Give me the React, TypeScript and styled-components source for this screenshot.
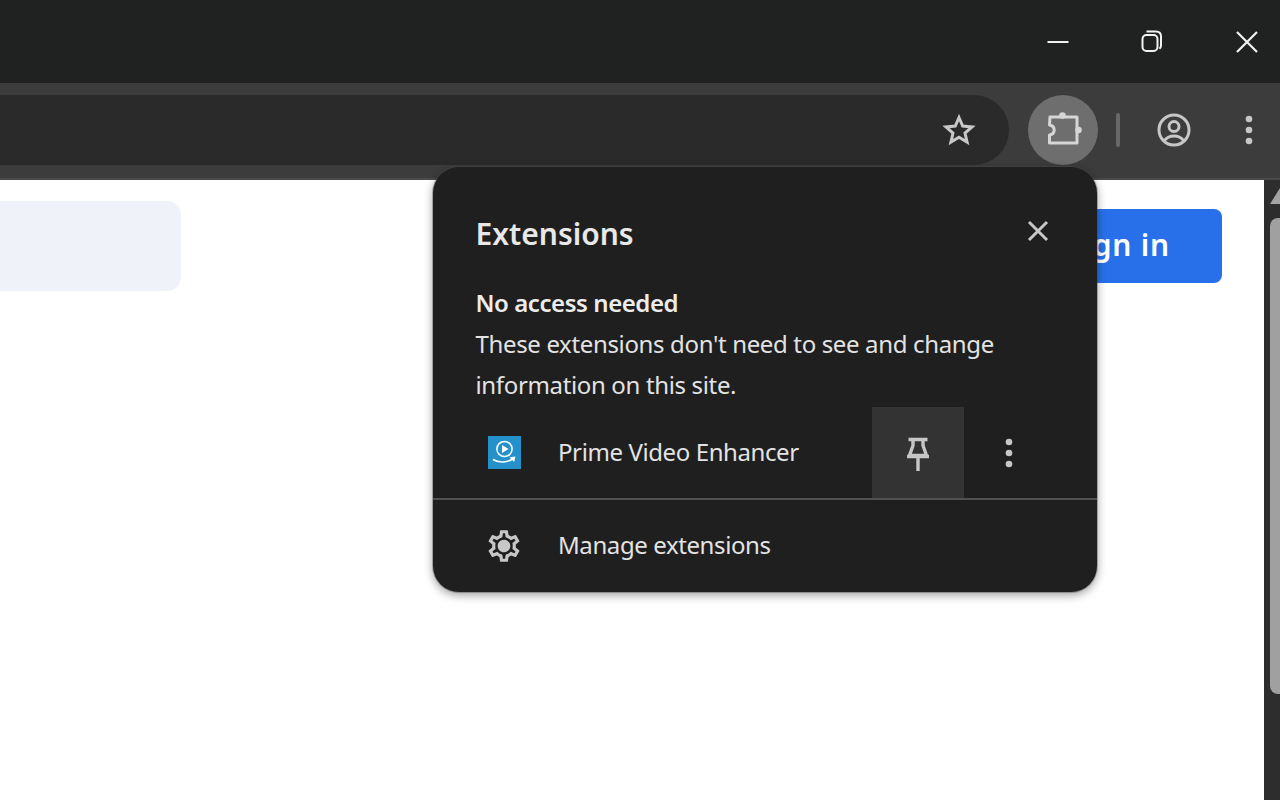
import * as React from "react";
import styled, { createGlobalStyle } from "styled-components";

const GlobalStyle = createGlobalStyle`
  html, body, #root {
    margin: 0;
    padding: 0;
    width: 100%;
    height: 100%;
    overflow: hidden;
    background: #ffffff;
  }
`;

const Page = styled.div`
  position: relative;
  display: flex;
  flex-direction: column;
  width: 1280px;
  height: 800px;
  overflow: hidden;
  font-family: "Noto Sans", "Open Sans", sans-serif;
`;

const TitleBar = styled.div`
  box-sizing: border-box;
  height: 83px;
  flex: none;
  background: #202222;
  display: flex;
  justify-content: flex-end;
  align-items: center;
  gap: 62.5px;
  padding-right: 17px;
`;

const WindowButton = styled.div`
  width: 32px;
  height: 32px;
  display: flex;
  align-items: center;
  justify-content: center;
`;

const Toolbar = styled.div`
  box-sizing: border-box;
  height: 97px;
  flex: none;
  background: #3c3c3c;
  border-bottom: 2px solid #4a4a4a;
  padding-top: 12px;
  display: flex;
  align-items: flex-start;
`;

const Omnibox = styled.div`
  box-sizing: border-box;
  width: 1009px;
  height: 70px;
  background: #2a2a2a;
  border-radius: 0 35px 35px 0;
  display: flex;
  justify-content: flex-end;
  align-items: center;
  padding-right: 33px;
`;

const ExtensionButton = styled.div`
  width: 70px;
  height: 70px;
  margin-left: 19px;
  border-radius: 50%;
  background: #6e6e6e;
  display: flex;
  align-items: center;
  justify-content: center;
`;

const Separator = styled.div`
  width: 4px;
  height: 34px;
  margin: 18px 0 0 18px;
  border-radius: 2px;
  background: #686868;
`;

const ToolbarIcon = styled.div<{ $gap: number }>`
  width: 40px;
  height: 70px;
  display: flex;
  align-items: center;
  justify-content: center;
  margin-left: ${(p) => p.$gap}px;
`;

const Content = styled.div`
  flex: 1;
  display: flex;
  min-height: 0;
`;

const Main = styled.div`
  flex: 1;
  background: #ffffff;
`;

const Header = styled.div`
  display: flex;
  justify-content: space-between;
  align-items: center;
  padding: 21px 42px 0 0;
`;

const Banner = styled.div`
  width: 181px;
  height: 90px;
  background: #eff3f9;
  border-radius: 0 14px 14px 0;
`;

const SignIn = styled.div`
  box-sizing: border-box;
  height: 74px;
  width: 200px;
  background: #2870ea;
  color: #ffffff;
  border-radius: 8px;
  font-size: 30px;
  font-weight: 600;
  letter-spacing: 0.8px;
  display: flex;
  align-items: center;
  justify-content: flex-end;
  padding: 0 52px 4px 0;
`;

const Scrollbar = styled.div`
  box-sizing: border-box;
  width: 16px;
  flex: none;
  background: #2d2d2d;
  padding: 8px 0 0 6px;
  overflow: hidden;
`;

const ScrollArrow = styled.div`
  width: 20px;
  height: 16px;
  background: #a3a3a3;
  clip-path: polygon(50% 0, 100% 100%, 0 100%);
`;

const ScrollThumb = styled.div`
  width: 20px;
  height: 476px;
  margin-top: 14px;
  background: #a0a0a0;
  border-radius: 8px;
`;

const Popup = styled.div`
  position: absolute;
  top: 167px;
  left: 433px;
  width: 664px;
  height: 425px;
  box-sizing: border-box;
  background: #1f1f1f;
  border-radius: 26px;
  box-shadow: 0 3px 10px rgba(0, 0, 0, 0.4), 0 0 0 1px rgba(90, 90, 90, 0.35);
  color: #e3e3e3;
  display: flex;
  flex-direction: column;
`;

const PopupHeader = styled.div`
  height: 115px;
  flex: none;
  box-sizing: border-box;
  display: flex;
  justify-content: space-between;
  align-items: flex-start;
  padding: 44px 47px 0 42.5px;
`;

const PopupTitle = styled.div`
  font-size: 30px;
  line-height: 46px;
  font-weight: 600;
  color: #e8e8e8;
`;

const CloseButton = styled.div`
  width: 24px;
  height: 24px;
  margin-top: 8px;
  display: flex;
  align-items: center;
  justify-content: center;
`;

const Section = styled.div`
  padding: 0 42.5px 2px;
  font-size: 24px;
  line-height: 41px;
  letter-spacing: -0.35px;
`;

const SectionTitle = styled.div`
  font-weight: 600;
  letter-spacing: -0.44px;
  color: #ececec;
`;

const ExtensionRow = styled.div`
  height: 93px;
  box-sizing: border-box;
  flex: none;
  display: flex;
  align-items: stretch;
  border-bottom: 2px solid #505050;
`;

const RowIcon = styled.div`
  width: 125px;
  flex: none;
  display: flex;
  align-items: center;
  justify-content: center;
  padding-left: 17px;
  box-sizing: border-box;
`;

const RowLabel = styled.div`
  flex: 1;
  display: flex;
  align-items: center;
  padding-bottom: 2px;
  font-size: 24px;
  letter-spacing: -0.4px;
  color: #e3e3e3;
`;

const PinButton = styled.div`
  width: 92px;
  box-sizing: border-box;
  padding-top: 4px;
  background: #333333;
  display: flex;
  align-items: center;
  justify-content: center;
`;

const MenuButton = styled.div`
  width: 90px;
  margin-right: 43px;
  display: flex;
  align-items: center;
  justify-content: center;
`;

const ManageRow = styled.div`
  flex: 1;
  display: flex;
  align-items: center;
  padding-bottom: 1px;
`;

const Dots = () => (
  <svg width="10" height="32" viewBox="0 0 10 32" fill="#c7c7c7">
    <circle cx="5" cy="5" r="3.3" />
    <circle cx="5" cy="16" r="3.3" />
    <circle cx="5" cy="27" r="3.3" />
  </svg>
);

const PrimeLogo = () => (
  <svg width="33" height="33" viewBox="0 0 33 33">
    <rect width="33" height="33" fill="#2491cb" />
    <circle cx="16.5" cy="13" r="7.6" fill="none" stroke="#fff" strokeWidth="1.5" />
    <path d="M14 8.900v8l6.500-4z" fill="#fff" />
    <path d="M5 23.500c5.500 3.600 14.500 3.600 21-1.500" fill="none" stroke="#fff" strokeWidth="1.6" />
    <path d="M21.500 21.200l6-.7-1.400 5.600z" fill="#fff" />
  </svg>
);

const App: React.FC = () => (
  <Page>
    <GlobalStyle />
    <TitleBar>
      <WindowButton>
        <svg width="24" height="24" viewBox="0 0 24 24">
          <path d="M1.500 12h21" stroke="#f2f2f2" strokeWidth="2" />
        </svg>
      </WindowButton>
      <WindowButton>
        <svg width="24" height="24" viewBox="0 0 24 24" fill="none" stroke="#f2f2f2" strokeWidth="2">
          <rect x="1.500" y="5" width="15" height="16" rx="4" />
          <path d="M5.500 1.500H15c3 0 5 2 5 5v9c0 1.500-.6 2.500-1.600 3.300" />
        </svg>
      </WindowButton>
      <WindowButton>
        <svg width="24" height="24" viewBox="0 0 24 24">
          <path d="M2 2l20 20M22 2L2 22" stroke="#f2f2f2" strokeWidth="2.200" />
        </svg>
      </WindowButton>
    </TitleBar>

    <Toolbar>
      <Omnibox>
        <svg width="34" height="34" viewBox="0 0 34 34" fill="none" stroke="#c7c7c7" strokeWidth="3" strokeLinejoin="miter">
          <path d="M17 4.500l3.700 8.600 9.300.8-7 6.100 2.100 9.100-8.100-4.800-8.100 4.800 2.100-9.100-7-6.100 9.300-.8z" />
        </svg>
      </Omnibox>
      <ExtensionButton>
        <svg width="40" height="40" viewBox="0 0 40 40" fill="none">
          <path
            d="M7 7h27v26H6.500v-8c3.200-.5 4.700-2.500 4.700-5s-1.500-4.500-4.700-5z"
            stroke="#d6d6d6"
            strokeWidth="3"
            strokeLinejoin="round"
          />
          <circle cx="19.500" cy="5.500" r="3.300" fill="#d6d6d6" />
          <circle cx="35.500" cy="20" r="3.300" fill="#d6d6d6" />
        </svg>
      </ExtensionButton>
      <Separator />
      <ToolbarIcon $gap={34}>
        <svg width="36" height="36" viewBox="0 0 36 36" fill="none" stroke="#c7c7c7" strokeWidth="3">
          <circle cx="18" cy="18" r="15" />
          <circle cx="18" cy="14.500" r="5" />
          <path d="M8 29c2.500-3.500 6-5 10-5s7.500 1.500 10 5" />
        </svg>
      </ToolbarIcon>
      <ToolbarIcon $gap={35}>
        <Dots />
      </ToolbarIcon>
    </Toolbar>

    <Content>
      <Main>
        <Header>
          <Banner />
          <SignIn>Sign in</SignIn>
        </Header>
      </Main>
      <Scrollbar>
        <ScrollArrow />
        <ScrollThumb />
      </Scrollbar>
    </Content>

    <Popup>
      <PopupHeader>
        <PopupTitle>Extensions</PopupTitle>
        <CloseButton>
          <svg width="24" height="24" viewBox="0 0 24 24">
            <path d="M3 3l18 18M21 3L3 21" stroke="#c7c7c7" strokeWidth="3" />
          </svg>
        </CloseButton>
      </PopupHeader>
      <Section>
        <SectionTitle>No access needed</SectionTitle>
        <div>These extensions don't need to see and change information on this site.</div>
      </Section>
      <ExtensionRow>
        <RowIcon>
          <PrimeLogo />
        </RowIcon>
        <RowLabel>Prime Video Enhancer</RowLabel>
        <PinButton>
          <svg width="26" height="36" viewBox="0 0 26 36" fill="none" stroke="#c7c7c7" strokeWidth="3.400">
            <path d="M3.500 2.500h19M8 2.500v6L4.500 18.500h17L18 8.500v-6M2 19.500h22M13 19v15" />
          </svg>
        </PinButton>
        <MenuButton>
          <Dots />
        </MenuButton>
      </ExtensionRow>
      <ManageRow>
        <RowIcon>
          <svg width="38" height="38" viewBox="0 0 24 24" fill="#c7c7c7">
            <path d="M19.430 12.980c.04-.32.07-.64.07-.98 0-.34-.03-.66-.07-.98l2.110-1.650c.19-.15.24-.42.12-.64l-2-3.460c-.09-.16-.26-.25-.44-.25-.06 0-.12.01-.17.03l-2.490 1c-.52-.4-1.080-.73-1.690-.98l-.38-2.650C14.460 2.180 14.250 2 14 2h-4c-.25 0-.46.18-.49.42l-.38 2.650c-.61.25-1.170.59-1.690.98l-2.490-1c-.06-.02-.12-.03-.18-.03-.17 0-.34.09-.43.25l-2 3.460c-.13.22-.07.49.12.64l2.110 1.650c-.04.32-.07.65-.07.98 0 .33.03.66.07.98l-2.110 1.650c-.19.15-.24.42-.12.64l2 3.460c.09.16.26.25.44.25.06 0 .12-.01.17-.03l2.490-1c.52.4 1.080.73 1.690.98l.38 2.650c.03.24.24.42.49.42h4c.25 0 .46-.18.49-.42l.38-2.650c.61-.25 1.170-.59 1.690-.98l2.490 1c.06.02.12.03.18.03.17 0 .34-.09.43-.25l2-3.460c.12-.22.07-.49-.12-.64l-2.110-1.650zm-1.980-1.710c.04.31.05.52.05.73 0 .21-.02.43-.05.73l-.14 1.130.89.7 1.080.84-.7 1.210-1.270-.51-1.040-.42-.9.68c-.43.32-.84.56-1.250.73l-1.060.43-.16 1.130-.2 1.350h-1.400l-.19-1.350-.16-1.130-1.060-.43c-.43-.18-.83-.41-1.230-.71l-.91-.7-1.060.43-1.270.51-.7-1.210 1.080-.84.89-.7-.14-1.130c-.03-.31-.05-.54-.05-.74s.02-.43.05-.73l.14-1.130-.89-.7-1.080-.84.7-1.210 1.270.51 1.040.42.9-.68c.43-.32.84-.56 1.250-.73l1.060-.43.16-1.130.2-1.350h1.390l.19 1.350.16 1.130 1.060.43c.43.18.83.41 1.230.71l.91.7 1.060-.43 1.270-.51.7 1.210-1.070.85-.89.7.14 1.130zM12 8c-2.210 0-4 1.790-4 4s1.790 4 4 4 4-1.790 4-4-1.790-4-4-4z" />
          </svg>
        </RowIcon>
        <RowLabel>Manage extensions</RowLabel>
      </ManageRow>
    </Popup>
  </Page>
);

export default App;
